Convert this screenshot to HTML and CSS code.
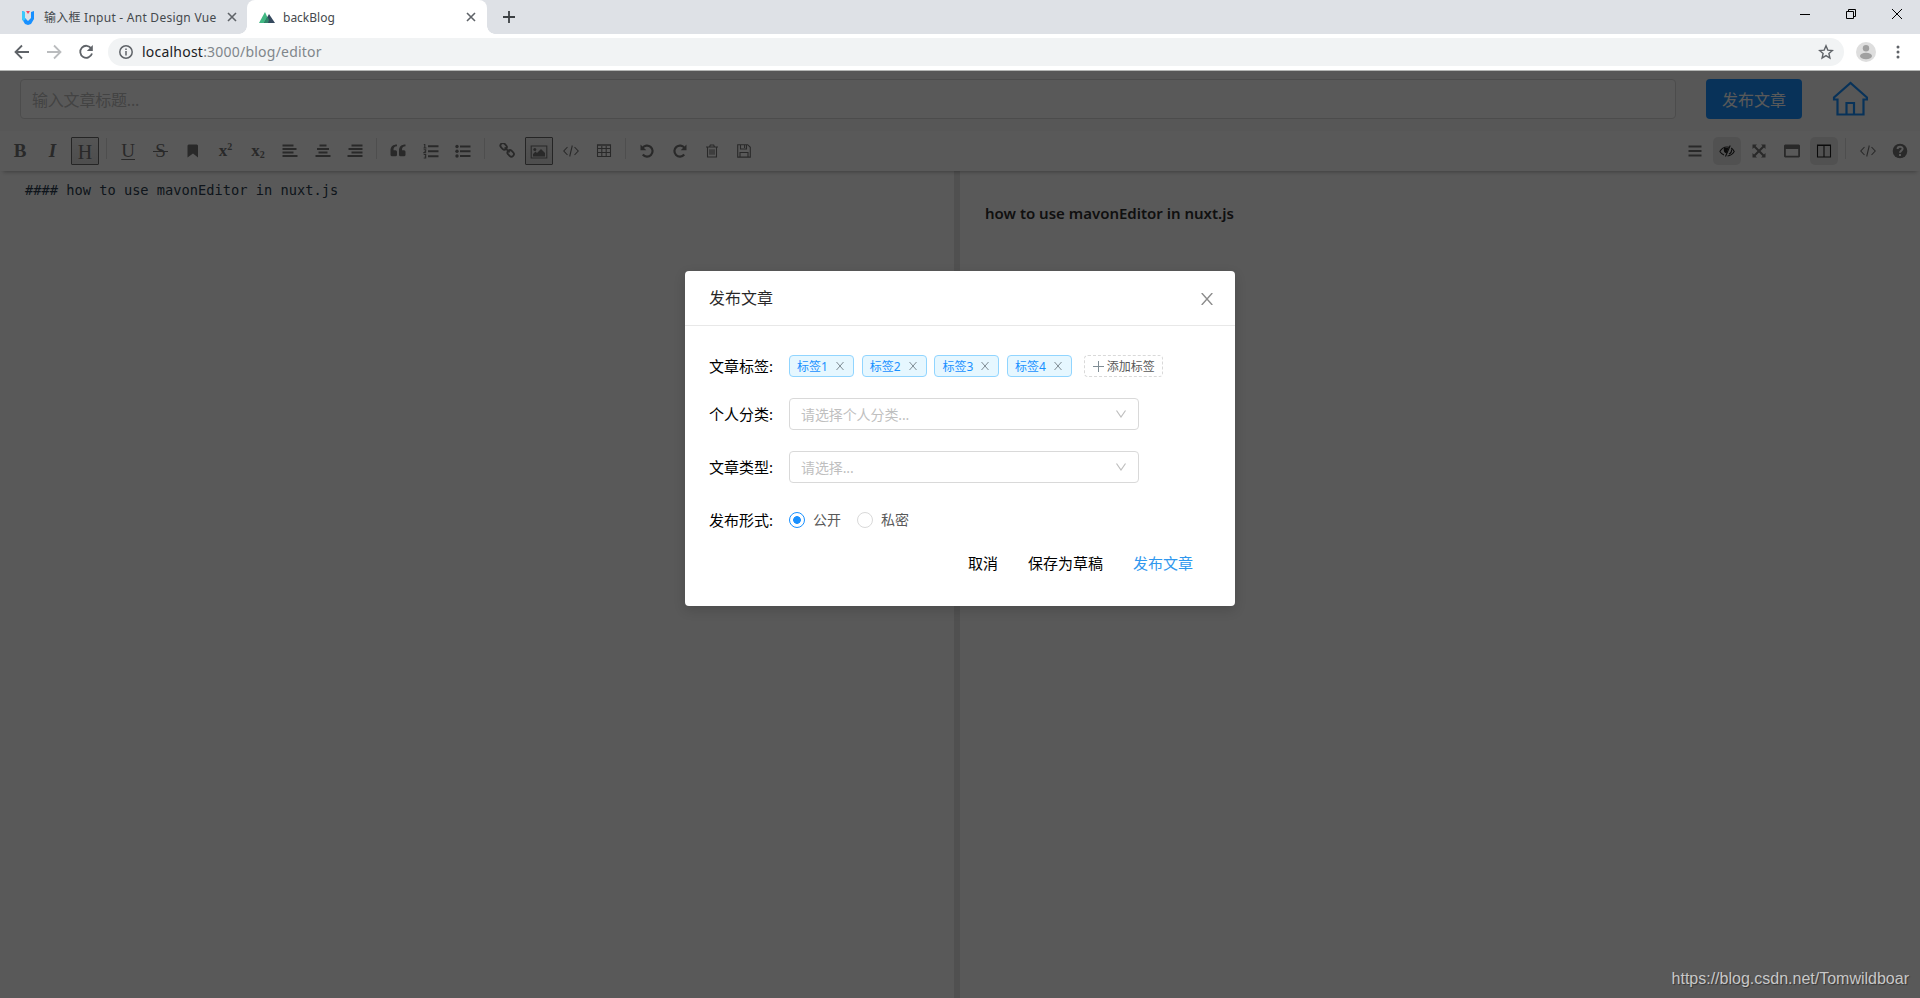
FILE: index.html
```html
<!DOCTYPE html>
<html lang="zh-CN">
<head>
    <meta charset="UTF-8">
    <meta name="viewport" content="width=device-width, initial-scale=1.0">
    <title>backBlog</title>
    <link rel="stylesheet" href="styles.css">
</head>
<body>
    <!-- Browser tabs -->
    <div class="tab-strip">
        <div class="tab">
            <svg class="favicon" viewBox="0 0 14 16"><path d="M1 2l3 1v6l3 3 3-3V3l3-1v8l-3 5-3 1-3-1-3-5z" fill="#1890ff"/><path d="M1 2l3 1v6l1 1-3 2-1-2z" fill="#3cc8fb"/><path d="M5 2h4L7 5z" fill="#f5485d"/></svg>
            <span class="tab-title tab-title-ant">输入框 Input - Ant Design Vue</span>
            <svg class="tab-close" viewBox="0 0 10 10"><path d="M1 1l8 8M9 1L1 9"/></svg>
        </div>
        <div class="tab active">
            <svg class="favicon nuxt" viewBox="0 0 16 12"><path d="M0 12L6 1l5 11z" fill="#41b883"/><path d="M5 12l5-9 6 9z" fill="#35495e"/><path d="M5 12l3.500-6.300L10 9l-1 3z" fill="#2f8568"/></svg>
            <span class="tab-title">backBlog</span>
            <svg class="tab-close" viewBox="0 0 10 10"><path d="M1 1l8 8M9 1L1 9"/></svg>
        </div>
        <svg class="new-tab" viewBox="0 0 12 12"><path d="M6 0v12M0 6h12"/></svg>
        <div class="window-controls">
            <svg viewBox="0 0 10 10"><path d="M0 5.500h10"/></svg>
            <svg viewBox="0 0 10 10"><path d="M.5 2.500h7v7h-7zM2.500 2.500v-2h7v7h-2"/></svg>
            <svg viewBox="0 0 10 10"><path d="M0 0l10 10M10 0L0 10"/></svg>
        </div>
    </div>

    <!-- Address bar -->
    <div class="nav-bar">
        <svg class="nav-icon" viewBox="0 0 16 16"><path d="M15 8H2M8 1.500L1.500 8 8 14.500"/></svg>
        <svg class="nav-icon disabled" viewBox="0 0 16 16"><path d="M1 8h13M8 1.500L14.500 8 8 14.500"/></svg>
        <svg class="nav-icon" viewBox="0 0 16 16"><path d="M13.300 4.500A6 6 0 1 0 14 9.500"/><path d="M14.800 1v6h-6z" fill="#5f6368" stroke="none"/></svg>
        <div class="omnibox">
            <svg class="info" viewBox="0 0 14 14"><circle cx="7" cy="7" r="6.200"/><path d="M7 6v4.500M7 3.400v1.700"/></svg>
            <span class="url">localhost<span class="url-path">:3000/blog/editor</span></span>
            <svg class="star" viewBox="0 0 16 16"><path d="M8 1.800l1.800 4.300 4.600.4-3.500 3 1 4.500L8 11.600 4.100 14l1-4.500-3.500-3 4.600-.4z"/></svg>
        </div>
        <svg class="avatar" viewBox="0 0 20 20"><circle cx="10" cy="10" r="10" fill="#dedede"/><circle cx="10" cy="6.200" r="3.200" fill="#a0a0a0"/><ellipse cx="10" cy="14" rx="6" ry="3.200" fill="#a0a0a0"/></svg>
        <svg class="more" viewBox="0 0 4 14"><circle cx="2" cy="2" r="1.500"/><circle cx="2" cy="7" r="1.500"/><circle cx="2" cy="12" r="1.500"/></svg>
    </div>

    <div class="page">
        <header class="editor-header">
            <div class="title-input">输入文章标题...</div>
            <div class="publish-btn">发布文章</div>
            <svg class="home" viewBox="0 0 36 36"><path d="M5.500 18.500H2v-2L18.500 2 35 16.500v2h-3.500V33.500h-26zM14.500 33.500v-11.500h7.500v11.500"/></svg>
        </header>

        <!-- Markdown toolbar -->
        <div class="toolbar">
            <div class="tool-group">
                <span class="tool letter bold">B</span>
                <span class="tool letter bold italic">I</span>
                <span class="tool letter selected heading">H</span>
                <i class="divider"></i>
                <span class="tool letter underline">U</span>
                <span class="tool letter strike">S</span>
                <span class="tool"><svg viewBox="0 0 16 16"><path d="M3.500 1.500h8.500l1 1v12L8 10.500l-5.500 4v-12z"/></svg></span>
                <span class="tool script">x<sup>2</sup></span>
                <span class="tool script">x<sub>2</sub></span>
                <span class="tool"><svg viewBox="0 0 16 16"><path d="M.5 1.500h11v2H.5zM.5 5h14v2H.5zM.5 8.500h11v2H.5zM.5 12h15v2H.5z"/></svg></span>
                <span class="tool"><svg viewBox="0 0 16 16"><path d="M4.500 1.500h7v2h-7zM2 5h12v2H2zM3.500 8.500h9v2h-9zM.5 12h15v2H.5z"/></svg></span>
                <span class="tool"><svg viewBox="0 0 16 16"><path d="M4.500 1.500h11v2h-11zM1.500 5h14v2h-14zM4.500 8.500h11v2h-11zM.5 12h15v2H.5z"/></svg></span>
                <i class="divider"></i>
                <span class="tool"><svg viewBox="0 0 16 16"><path d="M7 1.500v1.800c-2.500 0-3.500 1-3.500 4h2A1.500 1.500 0 0 1 7 8.800v3a1.500 1.500 0 0 1-1.500 1.500h-3.500A1.500 1.500 0 0 1 .5 11.800V7.500c0-4 2.500-6 6.500-6zM15.500 1.500v1.800c-2.500 0-3.500 1-3.500 4h2a1.500 1.500 0 0 1 1.500 1.500v3a1.500 1.500 0 0 1-1.500 1.500h-3.500A1.500 1.500 0 0 1 9 11.800V7.500c0-4 2.500-6 6.500-6z"/></svg></span>
                <span class="tool"><svg viewBox="0 0 16 16"><path d="M5 2.200h10.500v2H5zM5 7.200h10.500v2H5zM5 12.200h10.500v2H5z"/><path class="line" d="M.8 1.500h1v3.500M.5 5h3M.7 6.800h2v1.500l-2 1.500h2.500M.7 11.500h2v1.700h-1 1v1.800h-2"/></svg></span>
                <span class="tool"><svg viewBox="0 0 16 16"><path d="M5 2.500h10.500v2H5zM5 7.200h10.500v2H5zM5 12h10.500v2H5z"/><circle cx="2" cy="3.500" r="1.700"/><circle cx="2" cy="8.200" r="1.700"/><circle cx="2" cy="13" r="1.700"/></svg></span>
                <i class="divider"></i>
                <span class="tool"><svg viewBox="0 0 16 16"><g class="thick" transform="rotate(45 8 7)"><rect x="-.5" y="4.300" width="7" height="5" rx="2.500"/><rect x="9.500" y="4.300" width="7" height="5" rx="2.500"/><path d="M4.500 6.800h7"/></g></svg></span>
                <span class="tool selected image"><svg viewBox="0 0 18 16"><path class="line" d="M1.200 2h15.600v12H1.200z"/><circle cx="4.800" cy="5.500" r="1.500"/><path d="M3 12.500V10l2.500-2.500L7 9l4-4 4 4v3.500z"/></svg></span>
                <span class="tool"><svg viewBox="0 0 16 16"><path class="line" d="M4.500 4L.8 8l3.700 4M11.500 4l3.700 4-3.700 4M9.300 2.500l-2.600 11"/></svg></span>
                <span class="tool"><svg viewBox="0 0 16 16"><path class="line" d="M1.500 1.700h13v11.800h-13zM1 2.300h14M1 5.500h14M1 9.500h14M5.800 3v10.500M10.200 3v10.500"/></svg></span>
                <i class="divider"></i>
                <span class="tool"><svg viewBox="0 0 16 16"><path class="heavy" d="M3.500 5a5.500 5.500 0 1 1 .3 6.500"/><path d="M1.500 1.500v5.800h5.800z"/></svg></span>
                <span class="tool"><svg viewBox="0 0 16 16"><path class="heavy" d="M12.500 5a5.500 5.500 0 1 0-.3 6.500"/><path d="M14.500 1.500v5.800H8.700z"/></svg></span>
                <span class="tool"><svg viewBox="0 0 16 16"><path class="line" d="M2 4h12M5.500 4l.8-2h3.400l.8 2M3.500 4v10h9V4M6 6.200v5.600M8 6.200v5.600M10 6.200v5.600"/></svg></span>
                <span class="tool"><svg viewBox="0 0 16 16"><path class="line" d="M1.700 1.700h10l2.600 2.600v9.800H1.700zM4.500 2v4h6V2M4 14v-4.500h8V14M8.600 2v3"/></svg></span>
            </div>
            <div class="tool-group">
                <span class="tool"><svg viewBox="0 0 16 16"><path d="M1.500 2.500h13v2h-13zM1.500 7h13v2h-13zM1.500 11.500h13v2h-13z"/></svg></span>
                <span class="tool on"><svg viewBox="0 0 16 16"><path class="line" d="M.8 8.500C2.500 5.500 5 4 8 4c.8 0 1.500.1 2.200.3M5 12C3.200 11.300 1.800 10 .8 8.500M12.200 5c1.300.8 2.200 2 3 3.500-1.500 2.500-3.800 4.200-6.700 4.500M11.200 2.500L6.500 13.500M12.500 6.500c.3 2-.7 3.700-2.500 4.500"/><path d="M5 5h4.500L7.500 10.500C5 9.700 4.200 7.500 5 5z"/></svg></span>
                <span class="tool"><svg viewBox="0 0 16 16"><path d="M1.500 1.500H6L4.500 3 8 6.500 11.500 3 10 1.500h4.500V6L13 4.500 9.500 8l3.500 3.500 1.500-1.500v4.500H10l1.500-1.500L8 9.500 4.500 13 6 14.500H1.500V10L3 11.500 6.500 8 3 4.500 1.500 6z"/></svg></span>
                <span class="tool"><svg viewBox="0 0 16 16"><path fill-rule="evenodd" d="M1 1.500h14l1 1v11l-1 1H1l-1-1v-11zM1.800 6v6.800h12.400V6z"/></svg></span>
                <span class="tool on"><svg viewBox="0 0 16 16"><path class="line" d="M1.500 2h13v12h-13zM8 2v12M1 2.500h14"/></svg></span>
                <i class="divider"></i>
                <span class="tool"><svg viewBox="0 0 16 16"><path class="line" d="M4.500 4L.8 8l3.700 4M11.500 4l3.700 4-3.700 4M9.300 2.500l-2.600 11"/></svg></span>
                <span class="tool"><svg viewBox="0 0 16 16"><circle cx="8" cy="8" r="7.300"/><path class="question" d="M5.600 6c0-3 5-3 5-.2C10.600 7.700 8 7.600 8 9.800M8 11v2"/></svg></span>
            </div>
        </div>

        <div class="editor">
            <div class="source">#### how to use mavonEditor in nuxt.js</div>
            <div class="preview"><h4>how to use mavonEditor in nuxt.js</h4></div>
        </div>

        <!-- Publish dialog -->
        <div class="mask">
            <div class="modal">
                <div class="modal-header">
                    <span>发布文章</span>
                    <svg viewBox="0 0 12 12"><path d="M.7 0l10.600 12M11.300 0L.7 12"/></svg>
                </div>
                <div class="modal-body">
                    <div class="form-row tags-row">
                        <span class="label">文章标签:</span>
                        <span class="tag">标签1<svg viewBox="0 0 8 8"><path d="M.5 0l7 8M7.500 0l-7 8"/></svg></span>
                        <span class="tag">标签2<svg viewBox="0 0 8 8"><path d="M.5 0l7 8M7.500 0l-7 8"/></svg></span>
                        <span class="tag">标签3<svg viewBox="0 0 8 8"><path d="M.5 0l7 8M7.500 0l-7 8"/></svg></span>
                        <span class="tag">标签4<svg viewBox="0 0 8 8"><path d="M.5 0l7 8M7.500 0l-7 8"/></svg></span>
                        <span class="tag tag-add"><svg viewBox="0 0 11 11"><path d="M5.500 0v11M0 5.500h11"/></svg>添加标签</span>
                    </div>
                    <div class="form-row">
                        <span class="label">个人分类:</span>
                        <div class="select">请选择个人分类...<svg viewBox="0 0 10 8"><path d="M.5.500L5 7 9.500.5"/></svg></div>
                    </div>
                    <div class="form-row">
                        <span class="label">文章类型:</span>
                        <div class="select">请选择...<svg viewBox="0 0 10 8"><path d="M.5.500L5 7 9.500.5"/></svg></div>
                    </div>
                    <div class="form-row">
                        <span class="label">发布形式:</span>
                        <span class="radio checked"></span><span class="radio-text">公开</span>
                        <span class="radio"></span><span class="radio-text">私密</span>
                    </div>
                    <div class="actions">
                        <span>取消</span>
                        <span>保存为草稿</span>
                        <span class="primary">发布文章</span>
                    </div>
                </div>
            </div>
            <div class="watermark">https://blog.csdn.net/Tomwildboar</div>
        </div>
    </div>
</body>
</html>
```
FILE: styles.css
```css
* {
    box-sizing: border-box;
}
body {
    margin: 0;
    height: 998px;
    display: flex;
    flex-direction: column;
    overflow: hidden;
    font-family: "Noto Sans", "Noto Sans CJK SC", sans-serif;
}
svg {
    display: block;
    flex: none;
    fill: none;
}

/* Browser tabs */
.tab-strip {
    height: 34px;
    display: flex;
    background: #dee1e6;
}
.tab {
    display: flex;
    align-items: center;
    width: 247px;
    padding: 0 10px 0 21px;
    font-size: 12px;
    color: #45494d;
}
.tab.active {
    position: relative;
    width: 240px;
    padding: 0 11px 0 12px;
    background: #fff;
    border-radius: 8px 8px 0 0;
}
/* Curved feet of the active tab */
.tab.active::before,
.tab.active::after {
    content: "";
    position: absolute;
    bottom: 0;
    width: 8px;
    height: 8px;
}
.tab.active::before {
    left: -8px;
    background: radial-gradient(circle at 0 0, #dee1e6 7.5px, #fff 8px);
}
.tab.active::after {
    right: -8px;
    background: radial-gradient(circle at 100% 0, #dee1e6 7.5px, #fff 8px);
}
.favicon {
    width: 14px;
    height: 16px;
    margin-right: 8px;
}
.favicon.nuxt {
    width: 16px;
    height: 12px;
}
.tab-title {
    flex: 1;
    white-space: nowrap;
}
.tab-title-ant {
    margin-left: 1px;
    letter-spacing: .25px;
}
.tab-close {
    width: 10px;
    height: 10px;
    stroke: #5f6368;
    stroke-width: 1.6;
}
.new-tab {
    width: 12px;
    height: 12px;
    margin: 11px 0 0 16px;
    stroke: #3c4043;
    stroke-width: 1.8;
}
.window-controls {
    display: flex;
    gap: 36px;
    margin: 9px 18px 0 auto;
}
.window-controls svg {
    width: 10px;
    height: 10px;
    stroke: #000;
}

/* Address bar */
.nav-bar {
    height: 37px;
    display: flex;
    align-items: center;
    padding: 0 20px 1px 14px;
    background: #fff;
    border-bottom: 1px solid #b4b6b4;
}
.nav-icon {
    width: 16px;
    height: 16px;
    margin-right: 16px;
    stroke: #5f6368;
    stroke-width: 1.8;
}
.nav-icon.disabled {
    stroke: #babcbe;
}
.omnibox {
    flex: 1;
    height: 28px;
    display: flex;
    align-items: center;
    padding: 0 10px 0 11px;
    margin-left: -2px;
    background: #f1f3f4;
    border-radius: 14px;
}
.info {
    width: 14px;
    height: 14px;
    stroke: #5f6368;
    stroke-width: 1.5;
}
.url {
    flex: 1;
    margin-left: 9px;
    font-size: 14px;
    letter-spacing: .22px;
    color: #202124;
}
.url-path {
    color: #80868b;
}
.star {
    width: 16px;
    height: 16px;
    stroke: #5f6368;
    stroke-width: 1.4;
}
.avatar {
    width: 20px;
    height: 20px;
    margin: 0 20px 0 12px;
}
.more {
    width: 4px;
    height: 14px;
    fill: #5f6368;
}

/* Blog editor page */
.page {
    position: relative;
    flex: 1;
    display: flex;
    flex-direction: column;
    background: #fff;
}
.editor-header {
    height: 60px;
    display: flex;
    align-items: flex-start;
    padding: 8px 52px 0 20px;
    background: #fafafa;
}
.title-input {
    flex: 1;
    height: 40px;
    padding-left: 11px;
    line-height: 40px;
    font-size: 16px;
    letter-spacing: -.2px;
    color: #bfbfbf;
    background: #fff;
    border: 1px solid #d9d9d9;
    border-radius: 4px;
}
.publish-btn {
    width: 96px;
    height: 40px;
    margin: 0 30px;
    line-height: 42px;
    text-align: center;
    font-size: 16px;
    color: #fff;
    background: #1890ff;
    border-radius: 4px;
}
.home {
    width: 36px;
    height: 36px;
    margin-top: 2px;
    stroke: #1890ff;
    stroke-width: 2.2;
}
.toolbar {
    position: relative;
    height: 40px;
    display: flex;
    align-items: center;
    justify-content: space-between;
    padding: 0 6px;
    background: #fff;
    box-shadow: 0 4px 4px -3px rgba(0, 0, 0, .3);
}
.tool-group {
    display: flex;
    align-items: center;
    gap: 4.45px;
}
.tool {
    width: 28px;
    height: 28px;
    display: flex;
    align-items: center;
    justify-content: center;
    color: #757575;
    border-radius: 5px;
}
.tool svg {
    width: 16px;
    height: 16px;
    fill: currentColor;
}
.tool .line,
.tool .thick,
.tool .heavy {
    fill: none;
    stroke: currentColor;
    stroke-width: 1.1;
}
.tool .thick {
    stroke-width: 1.8;
}
.tool .heavy {
    stroke-width: 2.2;
}
.tool .question {
    fill: none;
    stroke: #fff;
    stroke-width: 2;
}
.tool.selected {
    background: linear-gradient(#f2f2f2, #dedede);
    border: 1px solid #6a6a6a;
    border-radius: 1px;
}
.tool.selected svg {
    width: 18px;
}
.tool.image {
    padding-top: 1px;
}
.tool.on {
    color: #222;
    background: #e9e9e9;
}
.letter {
    font-family: "Liberation Serif", serif;
    font-size: 19px;
}
.bold {
    font-weight: bold;
}
.italic {
    font-style: italic;
}
.heading {
    padding-top: 2px;
    font-size: 20px;
}
.underline {
    text-decoration: underline;
    text-underline-offset: 2px;
}
/* The strike line runs a little past the letter */
.strike {
    background: linear-gradient(currentColor, currentColor) center 14px / 15px 1px no-repeat;
}
.script {
    font-family: "Liberation Serif", serif;
    font-size: 17px;
    font-weight: bold;
}
.script sup,
.script sub {
    font-size: 10px;
    line-height: 1;
}
.script sup {
    margin-top: -8px;
}
.script sub {
    margin-top: 8px;
}
.divider {
    width: 1px;
    height: 21px;
    margin: 0 2.7px 5px;
    background: #e0e0e0;
}
.editor {
    flex: 1;
    display: flex;
}
.source {
    width: 960px;
    padding: 9px 25px;
    border-right: 6px solid #e5e5e5;
    font-family: "DejaVu Sans Mono", monospace;
    font-size: 13.7px;
    line-height: 20px;
    color: #2c3e50;
}
.preview {
    flex: 1;
    padding: 30px 25px;
}
.preview h4 {
    margin: 0;
    font-size: 15px;
    font-weight: 600;
    line-height: 24px;
    color: #303030;
}

/* Dialog */
.mask {
    position: absolute;
    inset: 0;
    padding-top: 200px;
    background: rgba(0, 0, 0, .65);
}
.modal {
    width: 550px;
    height: 335px;
    margin: 0 auto;
    background: #fff;
    border-radius: 4px;
    box-shadow: 0 4px 12px rgba(0, 0, 0, .15);
}
.modal-header {
    height: 55px;
    display: flex;
    align-items: center;
    justify-content: space-between;
    padding: 0 22px 0 24px;
    border-bottom: 1px solid #e8e8e8;
    font-size: 16px;
    color: rgba(0, 0, 0, .85);
}
.modal-header span {
    margin-bottom: 2px;
}
.modal-header svg {
    width: 12px;
    height: 12px;
    margin-top: 2px;
    stroke: #8c8c8c;
    stroke-width: 1.4;
}
.modal-body {
    padding: 24px;
}
.form-row {
    height: 32px;
    display: flex;
    align-items: center;
    margin-bottom: 21px;
}
.tags-row {
    margin-bottom: 16px;
}
.label {
    width: 80px;
    margin-bottom: 2px;
    font-size: 15px;
    color: #000;
}
.tag {
    width: 65px;
    height: 22px;
    display: flex;
    align-items: center;
    justify-content: space-between;
    padding: 0 9px 0 7px;
    margin-right: 7.7px;
    font-size: 12px;
    color: #1890ff;
    background: #e6f7ff;
    border: 1px solid #91d5ff;
    border-radius: 4px;
}
.tag svg {
    width: 8px;
    height: 8px;
    stroke: #7f8c94;
}
.tag-add {
    width: 79px;
    margin-left: 4px;
    padding: 0 7px 0 8px;
    color: #595959;
    background: #fff;
    border: 1px dashed #d9d9d9;
}
.tag-add svg {
    width: 11px;
    height: 11px;
}
.select {
    width: 350px;
    height: 32px;
    display: flex;
    align-items: center;
    justify-content: space-between;
    padding: 0 12px 0 11px;
    font-size: 14px;
    letter-spacing: -.1px;
    color: #bfbfbf;
    border: 1px solid #d9d9d9;
    border-radius: 4px;
}
.select svg {
    width: 10px;
    height: 8px;
    stroke: #bfbfbf;
    stroke-width: 1.2;
}
.radio {
    width: 16px;
    height: 16px;
    border: 1px solid #d9d9d9;
    border-radius: 50%;
}
.radio.checked {
    border-color: #1890ff;
    background: radial-gradient(circle, #1890ff 3.5px, #fff 4.2px);
}
.radio-text {
    margin: 0 16px 2px 8px;
    font-size: 14px;
    color: #595959;
}
.actions {
    display: flex;
    justify-content: flex-end;
    gap: 30px;
    margin: -6px 18px 0 0;
    font-size: 15px;
    line-height: 24px;
    color: #000;
}
.primary {
    color: #2f97ee;
}
.watermark {
    position: absolute;
    right: 11px;
    bottom: 8px;
    font-family: "Liberation Sans", Arial, sans-serif;
    font-size: 16px;
    line-height: 22px;
    color: #c8c8c8;
    text-shadow: 1px 1px 1px rgba(0, 0, 0, .4);
}
```
